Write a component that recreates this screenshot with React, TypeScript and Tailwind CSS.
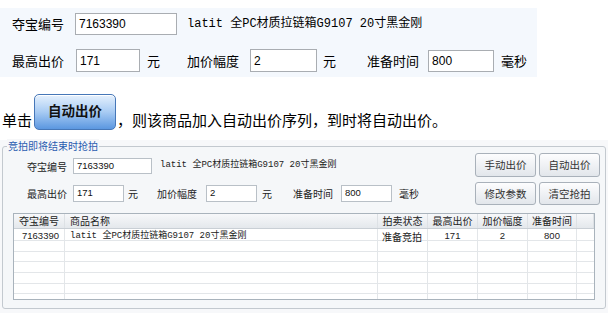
import React from "react";

const CJK = { fontFamily: '"Noto Sans CJK SC", "Liberation Sans", sans-serif' };
const MONO = { fontFamily: '"Liberation Mono", "Noto Sans CJK SC", monospace' };
const SANS = { fontFamily: '"Liberation Sans", "Noto Sans CJK SC", sans-serif' };

function TopInput({ w, h, value }: { w: string; h: string; value: string }) {
  return (
    <div
      className={`${w} ${h} border border-[#a9adb2] bg-white flex items-center pl-[3px] text-[12px] text-black`}
      style={SANS}
    >
      {value}
    </div>
  );
}

function SmallInput({ w, value }: { w: string; value: string }) {
  return (
    <div
      className={`${w} h-full border border-[#b9c0c7] bg-white flex items-center pl-[3px] text-[9.5px] text-[#111]`}
      style={SANS}
    >
      {value}
    </div>
  );
}

function GrayBtn({ label, h }: { label: string; h: string }) {
  return (
    <div
      className={`w-[61px] ${h} rounded-[3px] border border-[#a9b1ba] bg-linear-to-b from-[#fdfdfe] to-[#e2e6eb] flex items-center justify-center text-[10.5px] text-[#333]`}
    >
      {label}
    </div>
  );
}

const cols = "grid grid-cols-[51px_313px_50px_50px_50px_49px_17px]";
const rowHeights = ["h-[11px]", "h-[10px]", "h-[11px]", "h-[11px]", "h-[10px]"];

export default function App() {
  return (
    <div className="w-[608px] h-[313px] bg-white overflow-hidden text-black" style={CJK}>
      {/* top panel */}
      <div className="pt-[8px]">
        <div className="w-[537px] h-[69px] bg-[#f4f8fd] pt-[5px] pl-[12px] flex flex-col gap-[14px] text-[13px]">
          <div className="flex items-center h-[22px]">
            <span className="w-[63px]">夺宝编号</span>
            <TopInput w="w-[102px]" h="h-[22px]" value="7163390" />
            <span className="ml-[10px] text-[12px]" style={MONO}>
              latit 全PC材质拉链箱G9107 20寸黑金刚
            </span>
          </div>
          <div className="flex items-center h-[23px]">
            <span className="w-[64px]">最高出价</span>
            <TopInput w="w-[64px]" h="h-[23px]" value="171" />
            <span className="ml-[7px]">元</span>
            <span className="ml-[27px]">加价幅度</span>
            <div className="ml-[11px]">
              <TopInput w="w-[67px]" h="h-[23px]" value="2" />
            </div>
            <span className="ml-[6px]">元</span>
            <span className="ml-[31px]">准备时间</span>
            <div className="ml-[9px]">
              <TopInput w="w-[66px]" h="h-[22px]" value="800" />
            </div>
            <span className="ml-[7px]">毫秒</span>
          </div>
        </div>
      </div>

      {/* instruction line */}
      <div className="mt-[17px] h-[36px] flex items-end pl-[2px] text-[15px]">
        <span className="leading-[18px] mb-[1px]">单击</span>
        <div className="ml-[2px] w-[82px] h-[36px] rounded-[5px] border border-[#4677b8] bg-linear-to-b from-[#e6f1fd] via-[#a8cbf3] to-[#5b97e0] flex items-center justify-center pb-[4px] shadow-[inset_0_1px_0_#ffffff]">
          <span className="text-[13.5px] font-bold text-[#111]">自动出价</span>
        </div>
        <span className="leading-[18px] mb-[1px] ml-[1px]">，则该商品加入自动出价序列，到时将自动出价。</span>
      </div>

      {/* group box */}
      <div className="mt-[10px] h-[173px] bg-[#f7f8fa] pt-[6px] pl-[2px]">
        <div className="relative w-[604px] h-[163px] border border-[#c3c9cf] rounded-[3px] bg-[#f5f7f9]">
          <span className="absolute -top-[8px] left-[4px] px-[1px] bg-[#f6f7f9] text-[10px] leading-[14px] text-[#2a5cb0]">
            竞拍即将结束时抢拍
          </span>
          <div className="flex pt-[6px] text-[10px] text-[#222]">
            <div className="pl-[24px] pt-[5px] flex flex-col gap-[11px]">
              <div className="flex items-center h-[16px]">
                <span className="w-[46px]">夺宝编号</span>
                <SmallInput w="w-[79px]" value="7163390" />
                <span className="ml-[8px] text-[9px]" style={MONO}>
                  latit 全PC材质拉链箱G9107 20寸黑金刚
                </span>
              </div>
              <div className="flex items-center h-[17px]">
                <span className="w-[46px]">最高出价</span>
                <SmallInput w="w-[51px]" value="171" />
                <span className="ml-[4px]">元</span>
                <span className="ml-[19px]">加价幅度</span>
                <div className="ml-[9px] h-full">
                  <SmallInput w="w-[51px]" value="2" />
                </div>
                <span className="ml-[5px]">元</span>
                <span className="ml-[21px]">准备时间</span>
                <div className="ml-[8px] h-full">
                  <SmallInput w="w-[51px]" value="800" />
                </div>
                <span className="ml-[7px]">毫秒</span>
              </div>
            </div>
            <div className="ml-auto mr-[5px] grid grid-cols-2 gap-x-[3px] gap-y-[5px]">
              <GrayBtn label="手动出价" h="h-[24px]" />
              <GrayBtn label="自动出价" h="h-[24px]" />
              <GrayBtn label="修改参数" h="h-[23px]" />
              <GrayBtn label="清空抢拍" h="h-[23px]" />
            </div>
          </div>

          {/* table */}
          <div className="mt-[8px] ml-[10px] w-[582px] h-[87px] border border-[#a9b3bc] bg-white flex flex-col text-[10px] text-[#222]">
            <div className={`${cols} h-[15px] border-b border-[#c9cfd5] bg-linear-to-b from-[#f7f8fa] to-[#e4e8ec]`}>
              {["夺宝编号", "商品名称", "拍卖状态", "最高出价", "加价幅度", "准备时间", ""].map((h, i) => (
                <div
                  key={i}
                  className={`flex items-center leading-none border-r border-[#dde1e5] ${
                    i === 1 ? "pl-[5px]" : "justify-center"
                  }`}
                >
                  {h}
                </div>
              ))}
            </div>
            <div className={`${cols} h-[12px] border-b border-[#e3e6e9]`}>
              <div className="flex items-center justify-end pr-[5px] border-r border-[#e3e6e9] text-[9.5px]" style={SANS}>
                7163390
              </div>
              <div className="flex items-center pl-[5px] border-r border-[#e3e6e9]">
                <span className="text-[9px]" style={MONO}>
                  latit 全PC材质拉链箱G9107 20寸黑金刚
                </span>
              </div>
              <div className="flex items-center pl-[4px] border-r border-[#e3e6e9]">准备竞拍</div>
              <div className="flex items-center justify-center border-r border-[#e3e6e9] text-[9.5px]" style={SANS}>
                171
              </div>
              <div className="flex items-center justify-center border-r border-[#e3e6e9] text-[9.5px]" style={SANS}>
                2
              </div>
              <div className="flex items-center justify-center border-r border-[#e3e6e9] text-[9.5px]" style={SANS}>
                800
              </div>
              <div />
            </div>
            {rowHeights.map((rh, r) => (
              <div key={r} className={`${cols} ${rh} border-b border-[#e3e6e9]`}>
                {[0, 1, 2, 3, 4, 5].map((c) => (
                  <div key={c} className="border-r border-[#e3e6e9]" />
                ))}
                <div />
              </div>
            ))}
            <div className={`${cols} flex-1`}>
              {[0, 1, 2, 3, 4, 5].map((c) => (
                <div key={c} className="border-r border-[#e3e6e9]" />
              ))}
              <div />
            </div>
          </div>
        </div>
      </div>
    </div>
  );
}
